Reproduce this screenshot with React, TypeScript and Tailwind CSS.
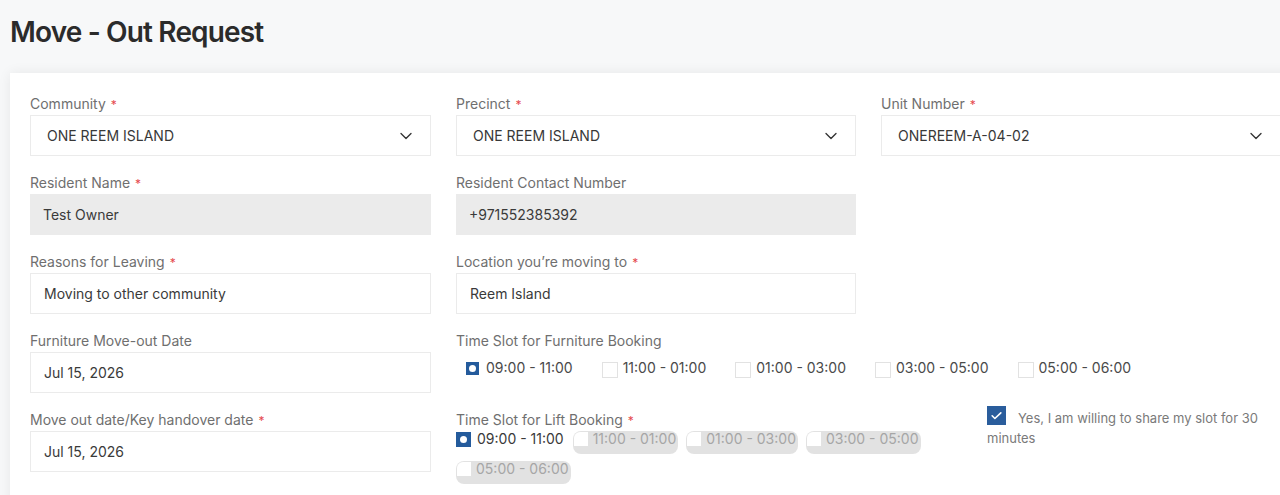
import {ChevronDown} from 'lucide-react';

const font = "font-['Inter','Noto_Sans',sans-serif]";

function Label({text, required}: {text: string; required?: boolean}) {
    return (
        <div className="h-[20px] mb-[1px] text-[14px] leading-[20px] text-[#6f6f6f]">
            {text}
            {required && <span className="ml-[5px] text-[#e5484d] text-[12px]">*</span>}
        </div>
    );
}

function SelectField({label, value}: {label: string; value: string}) {
    return (
        <div>
            <Label text={label} required/>
            <div className="flex h-[41px] items-center justify-between border border-[#ebebeb] bg-white pl-[16px] pr-[14px] text-[14px] text-[#383838]">
                <span>{value}</span>
                <ChevronDown size={20} strokeWidth={1.6} className="text-[#333]"/>
            </div>
        </div>
    );
}

function TextField({label, value, required, readOnly}: {
    label: string;
    value: string;
    required?: boolean;
    readOnly?: boolean;
}) {
    return (
        <div>
            <Label text={label} required={required}/>
            <div
                className={
                    readOnly
                        ? 'flex h-[41px] items-center bg-[#ebebeb] pl-[13px] text-[14px] text-[#3a3a3a]'
                        : 'flex h-[41px] items-center border border-[#ebebeb] bg-white pl-[13px] text-[14px] text-[#3a3a3a]'
                }
            >
                {value}
            </div>
        </div>
    );
}

const furnitureSlots = ['11:00 - 01:00', '01:00 - 03:00', '03:00 - 05:00', '05:00 - 06:00'];
const liftSlots = ['11:00 - 01:00', '01:00 - 03:00', '03:00 - 05:00', '05:00 - 06:00'];

function FurnitureSlots() {
    return (
        <div className="col-span-2">
            <Label text="Time Slot for Furniture Booking"/>
            <div className="mt-[7px] flex items-center gap-x-[29px] pl-[10px] text-[14px] leading-[20px] text-[#4a4a4a]">
                <div className="flex items-center">
                    <span className="flex h-[13px] w-[13px] items-center justify-center bg-[#245b9c]">
                        <span className="h-[7px] w-[7px] rounded-full bg-white"/>
                    </span>
                    <span className="ml-[7px]">09:00 - 11:00</span>
                </div>
                {furnitureSlots.map(slot => (
                    <div key={slot} className="flex items-center">
                        <span className="mt-[3px] h-[16px] w-[16px] border border-[#e2e2e2] bg-white"/>
                        <span className="ml-[5px]">{slot}</span>
                    </div>
                ))}
            </div>
        </div>
    );
}

function LiftSlots() {
    return (
        <div className="col-span-2 flex items-start">
            <div className="w-[510px]">
                <Label text="Time Slot for Lift Booking" required/>
                <div className="flex flex-wrap gap-x-[8px] gap-y-[7px] text-[14px] leading-[16px]">
                    <div className="flex items-start pr-[1px]">
                        <span className="mt-[1px] flex h-[15px] w-[15px] items-center justify-center bg-[#245b9c]">
                            <span className="h-[7px] w-[7px] rounded-full bg-white"/>
                        </span>
                        <span className="ml-[6px] text-[#3a3a3a]">09:00 - 11:00</span>
                    </div>
                    {liftSlots.map(slot => (
                        <div key={slot} className="flex items-start rounded-lg bg-[#e2e2e2] pb-[7px] pr-[2px]">
                            <span className="ml-[1px] mt-[1px] h-[14px] w-[14px] rounded-tl-md bg-white"/>
                            <span className="ml-[5px] text-[#a6a6a6]">{slot}</span>
                        </div>
                    ))}
                </div>
            </div>
            <div className="ml-[21px] -mt-[3px] w-[290px] text-[13px] leading-[20px] text-[#7a7a7a]">
                <span className="inline-flex h-[19px] w-[19px] -translate-y-[1px] items-center justify-center bg-[#2a5d9c] align-baseline">
                    <svg width="13" height="13" viewBox="0 0 24 24" fill="none" stroke="white" strokeWidth="3"
                         strokeLinecap="round" strokeLinejoin="round">
                        <path d="M4 12.5l5 5L20 7"/>
                    </svg>
                </span>
                <span className="ml-[12px]">Yes, I am willing to share my slot for 30 minutes</span>
            </div>
        </div>
    );
}

export default function App() {
    return (
        <div className={`h-screen overflow-hidden bg-[#f7f8f9] ${font}`}>
            <h1 className="px-[10px] pt-[14px] text-[28px] font-semibold leading-[36px] tracking-[-0.03em] text-[#2b2b2b]">
                Move - Out Request
            </h1>
            <div className="ml-[10px] mt-[23px] w-[1320px] bg-white pb-[40px] pl-[20px] pt-[21px] shadow-[0_0_12px_rgba(0,0,0,0.07)]">
                <div className="grid grid-cols-[401px_400px_400px] gap-x-[25px] gap-y-[17px]">
                    <SelectField label="Community" value="ONE REEM ISLAND"/>
                    <SelectField label="Precinct" value="ONE REEM ISLAND"/>
                    <SelectField label="Unit Number" value="ONEREEM-A-04-02"/>

                    <TextField label="Resident Name" value="Test Owner" required readOnly/>
                    <TextField label="Resident Contact Number" value="+971552385392" readOnly/>
                    <div/>

                    <TextField label="Reasons for Leaving" value="Moving to other community" required/>
                    <TextField label="Location you’re moving to" value="Reem Island" required/>
                    <div/>

                    <TextField label="Furniture Move-out Date" value="Jul 15, 2026"/>
                    <FurnitureSlots/>

                    <TextField label="Move out date/Key handover date" value="Jul 15, 2026" required/>
                    <LiftSlots/>
                </div>
            </div>
        </div>
    );
}
